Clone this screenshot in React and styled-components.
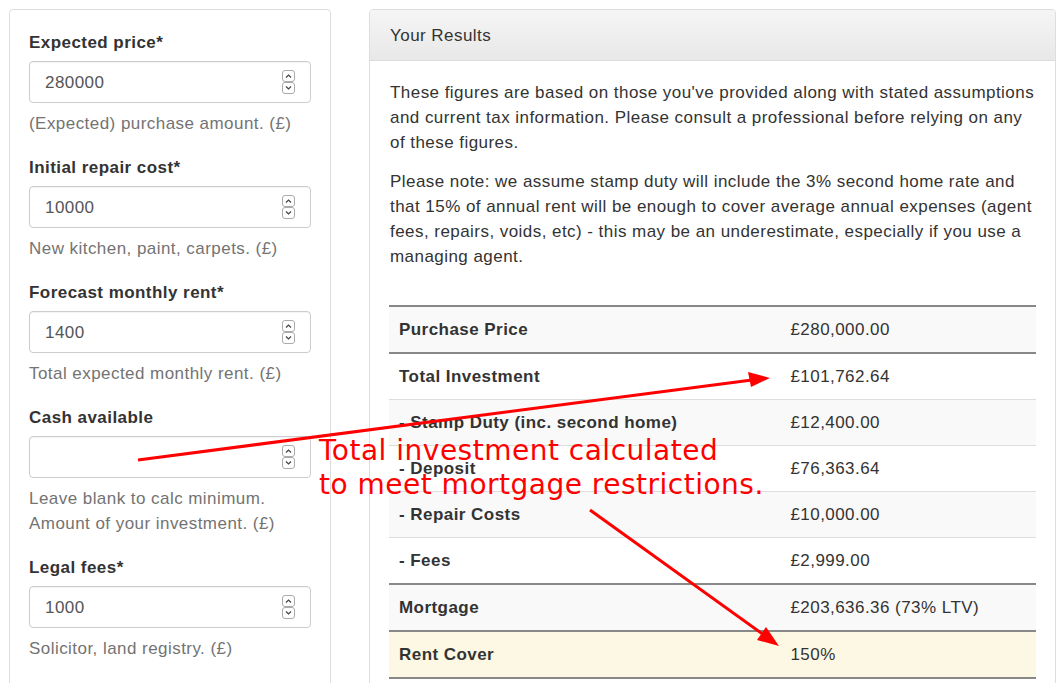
import React from "react"
import styled, { createGlobalStyle } from "styled-components"

const GlobalStyle = createGlobalStyle`
  html, body {
    margin: 0;
    padding: 0;
    background: #fff;
    overflow: hidden;
  }
  body {
    font-family: "Liberation Sans", Arial, Helvetica, sans-serif;
    font-size: 17px;
    letter-spacing: 0.45px;
    line-height: 25px;
    color: #333;
  }
`

const Page = styled.div`
  position: relative;
  height: 683px;
  overflow: hidden;
  padding: 9px 4px 0 9px;
  box-sizing: border-box;
  display: grid;
  grid-template-columns: 322px 1fr;
  column-gap: 38px;
  align-items: start;
`

const FormPanel = styled.div`
  border: 1px solid #ddd;
  border-radius: 4px;
  padding: 20px 19px;
  min-height: 720px;
  box-sizing: border-box;
`

const Group = styled.div`
  margin-bottom: 19px;
`

const Label = styled.label`
  display: block;
  font-weight: bold;
  margin-bottom: 6px;
`

const Field = styled.div`
  display: flex;
  align-items: center;
  height: 42px;
  box-sizing: border-box;
  border: 1px solid #ccc;
  border-radius: 4px;
  padding: 0 15px;
  box-shadow: inset 0 1px 1px rgba(0, 0, 0, 0.05);
`

const Input = styled.input`
  flex: 1;
  min-width: 0;
  border: 0;
  outline: 0;
  padding: 0;
  background: transparent;
  font: inherit;
  letter-spacing: inherit;
  color: #555;
`

const Help = styled.div`
  margin-top: 8px;
  color: #737373;
`

const ResultsPanel = styled.div`
  border: 1px solid #ddd;
  border-radius: 4px;
  min-height: 720px;
  box-sizing: border-box;
`

const PanelHeading = styled.div`
  padding: 13px 20px 12px;
  background: linear-gradient(to bottom, #f5f5f5 0%, #e8e8e8 100%);
  border-bottom: 1px solid #ddd;
  border-radius: 3px 3px 0 0;
`

const PanelBody = styled.div`
  padding: 19px 19px 20px 20px;
`

const Para = styled.p`
  margin: 0 0 14px;
`

const Table = styled.table`
  width: calc(100% + 1px);
  margin: 36px 0 0 -1px;
  border-collapse: collapse;
  border-bottom: 2px solid #888;
`

const Row = styled.tr`
  background: ${p => (p.$warn ? "#fcf8e3" : p.$striped ? "#f9f9f9" : "#fff")};
  border-top: ${p => (p.$thick ? "2px solid #888" : "1px solid #ddd")};
`

const Head = styled.th`
  width: 60.5%;
  text-align: left;
  font-weight: bold;
  padding: 10px 10px;
`

const Cell = styled.td`
  padding: 10px 10px;
`

const Overlay = styled.div`
  position: absolute;
  inset: 0;
  pointer-events: none;
`

const Arrows = styled.svg`
  position: absolute;
  left: 0;
  top: 0;
`

const Note = styled.div`
  position: absolute;
  left: 319px;
  top: 434px;
  font-family: "DejaVu Sans", Verdana, sans-serif;
  font-size: 28px;
  letter-spacing: 0.5px;
  line-height: 34px;
  color: #ff0000;
  white-space: nowrap;
`

const Spinner = () => (
  <svg width="13" height="24" viewBox="0 0 13 24">
    <rect x="0.5" y="0.5" width="12" height="11" rx="2.5" fill="#fff" stroke="#aaa" />
    <rect x="0.5" y="12.5" width="12" height="11" rx="2.5" fill="#fff" stroke="#aaa" />
    <path d="M4 7.5 L6.5 5 L9 7.5" fill="none" stroke="#444" strokeWidth="1.2" />
    <path d="M4 16.5 L6.5 19 L9 16.5" fill="none" stroke="#444" strokeWidth="1.2" />
  </svg>
)

const fields = [
  { label: "Expected price*", value: "280000", help: ["(Expected) purchase amount. (£)"] },
  { label: "Initial repair cost*", value: "10000", help: ["New kitchen, paint, carpets. (£)"] },
  { label: "Forecast monthly rent*", value: "1400", help: ["Total expected monthly rent. (£)"] },
  { label: "Cash available", value: "", help: ["Leave blank to calc minimum.", "Amount of your investment. (£)"] },
  { label: "Legal fees*", value: "1000", help: ["Solicitor, land registry. (£)"] },
]

const rows = [
  { name: "Purchase Price", value: "£280,000.00", thick: true, striped: true },
  { name: "Total Investment", value: "£101,762.64", thick: true },
  { name: "- Stamp Duty (inc. second home)", value: "£12,400.00", striped: true },
  { name: "- Deposit", value: "£76,363.64" },
  { name: "- Repair Costs", value: "£10,000.00", striped: true },
  { name: "- Fees", value: "£2,999.00" },
  { name: "Mortgage", value: "£203,636.36 (73% LTV)", thick: true, striped: true },
  { name: "Rent Cover", value: "150%", thick: true, warn: true },
]

export default function App() {
  return (
    <>
      <GlobalStyle />
      <Page>
        <FormPanel>
          {fields.map(f => (
            <Group key={f.label}>
              <Label>{f.label}</Label>
              <Field>
                <Input type="text" readOnly value={f.value} />
                <Spinner />
              </Field>
              <Help>
                {f.help.map(h => (
                  <div key={h}>{h}</div>
                ))}
              </Help>
            </Group>
          ))}
        </FormPanel>

        <ResultsPanel>
          <PanelHeading>Your Results</PanelHeading>
          <PanelBody>
            <Para>
              These figures are based on those you've provided along with stated assumptions
              and current tax information. Please consult a professional before relying on any
              of these figures.
            </Para>
            <Para>
              Please note: we assume stamp duty will include the 3% second home rate and
              that 15% of annual rent will be enough to cover average annual expenses (agent
              fees, repairs, voids, etc) - this may be an underestimate, especially if you use a
              managing agent.
            </Para>
            <Table>
              <tbody>
                {rows.map(r => (
                  <Row key={r.name} $thick={r.thick} $striped={r.striped} $warn={r.warn}>
                    <Head>{r.name}</Head>
                    <Cell>{r.value}</Cell>
                  </Row>
                ))}
              </tbody>
            </Table>
          </PanelBody>
        </ResultsPanel>

        <Overlay>
          <Arrows width="1060" height="683" viewBox="0 0 1060 683">
            <line x1="138" y1="460" x2="752" y2="380" stroke="#ff0000" strokeWidth="3" />
            <polygon points="770,378 748,372 751,387" fill="#ff0000" />
            <line x1="590" y1="510" x2="764" y2="635" stroke="#ff0000" strokeWidth="3" />
            <polygon points="779,646 757,640 766,627" fill="#ff0000" />
          </Arrows>
          <Note>
            Total investment calculated
            <br />
            to meet mortgage restrictions.
          </Note>
        </Overlay>
      </Page>
    </>
  )
}
